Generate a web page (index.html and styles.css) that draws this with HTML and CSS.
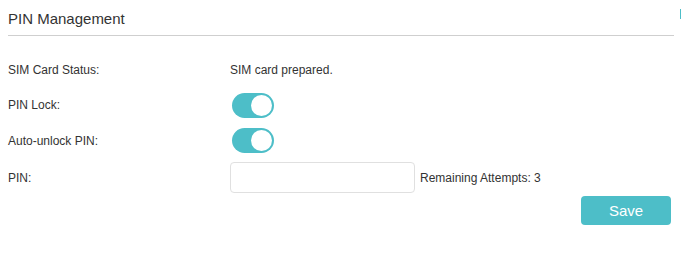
FILE: index.html
```html
<!DOCTYPE html>
<html>
<head>
<meta charset="utf-8">
<link rel="stylesheet" href="styles.css">
</head>
<body>
<div class="panel">
  <h2 class="title">PIN Management</h2>
  <div class="row row-first">
    <div class="label">SIM Card Status:</div>
    <div class="value">SIM card prepared.</div>
  </div>
  <div class="row row-toggle1">
    <div class="label">PIN Lock:</div>
    <div class="value"><span class="toggle on"><span class="knob"></span></span></div>
  </div>
  <div class="row row-toggle2">
    <div class="label">Auto-unlock PIN:</div>
    <div class="value"><span class="toggle on"><span class="knob"></span></span></div>
  </div>
  <div class="row row-pin">
    <div class="label">PIN:</div>
    <div class="value"><input class="pin-input" type="text"><span class="hint">Remaining Attempts: 3</span></div>
  </div>
  <div class="actions">
    <button class="save">Save</button>
  </div>
</div>
<div class="edge-mark"></div>
</body>
</html>
```

FILE: styles.css
```css
html, body {
  margin: 0;
  padding: 0;
  overflow: hidden;
  background: #fff;
}
body {
  font-family: Arial, "Liberation Sans", sans-serif;
  color: #333;
  font-size: 12px;
}
.panel {
  width: 666px;
  margin-left: 8px;
  padding-top: 9px;
}
.title {
  margin: 0;
  font-size: 15px;
  font-weight: normal;
  line-height: 20px;
  color: #333;
  padding-bottom: 6px;
  border-bottom: 1px solid #cfcfcf;
}
.row {
  display: flex;
  align-items: center;
  line-height: 14px;
}
.row-first { margin-top: 16px; height: 35px; }
.row-toggle1 { height: 36px; }
.row-toggle2 { height: 35px; }
.row-pin { padding-top: 4px; padding-bottom: 3px; }
.label {
  width: 222px;
  flex: none;
}
.value {
  display: flex;
  align-items: center;
}
.toggle {
  display: block;
  position: relative;
  width: 42px;
  height: 25px;
  margin-left: 2px;
  border-radius: 13px;
  background: #4dbec8;
}
.knob {
  position: absolute;
  top: 2px;
  right: 2px;
  width: 21px;
  height: 21px;
  border-radius: 50%;
  background: #fff;
}
.pin-input {
  box-sizing: border-box;
  width: 185px;
  height: 31px;
  margin: 0;
  border: 1px solid #e0e0e0;
  border-radius: 4px;
  padding: 0 8px;
  font: inherit;
  outline: none;
}
.hint {
  margin-left: 5px;
}
.actions {
  display: flex;
  justify-content: flex-end;
  padding-right: 3px;
}
.save {
  width: 90px;
  height: 29px;
  border: none;
  border-radius: 4px;
  background: #4dbec8;
  color: #fff;
  font-family: Arial, "Liberation Sans", sans-serif;
  font-size: 15px;
  padding: 0;
}
.edge-mark {
  position: absolute;
  left: 680px;
  top: 9px;
  width: 1px;
  height: 10px;
  background: #4dbec8;
}
```
